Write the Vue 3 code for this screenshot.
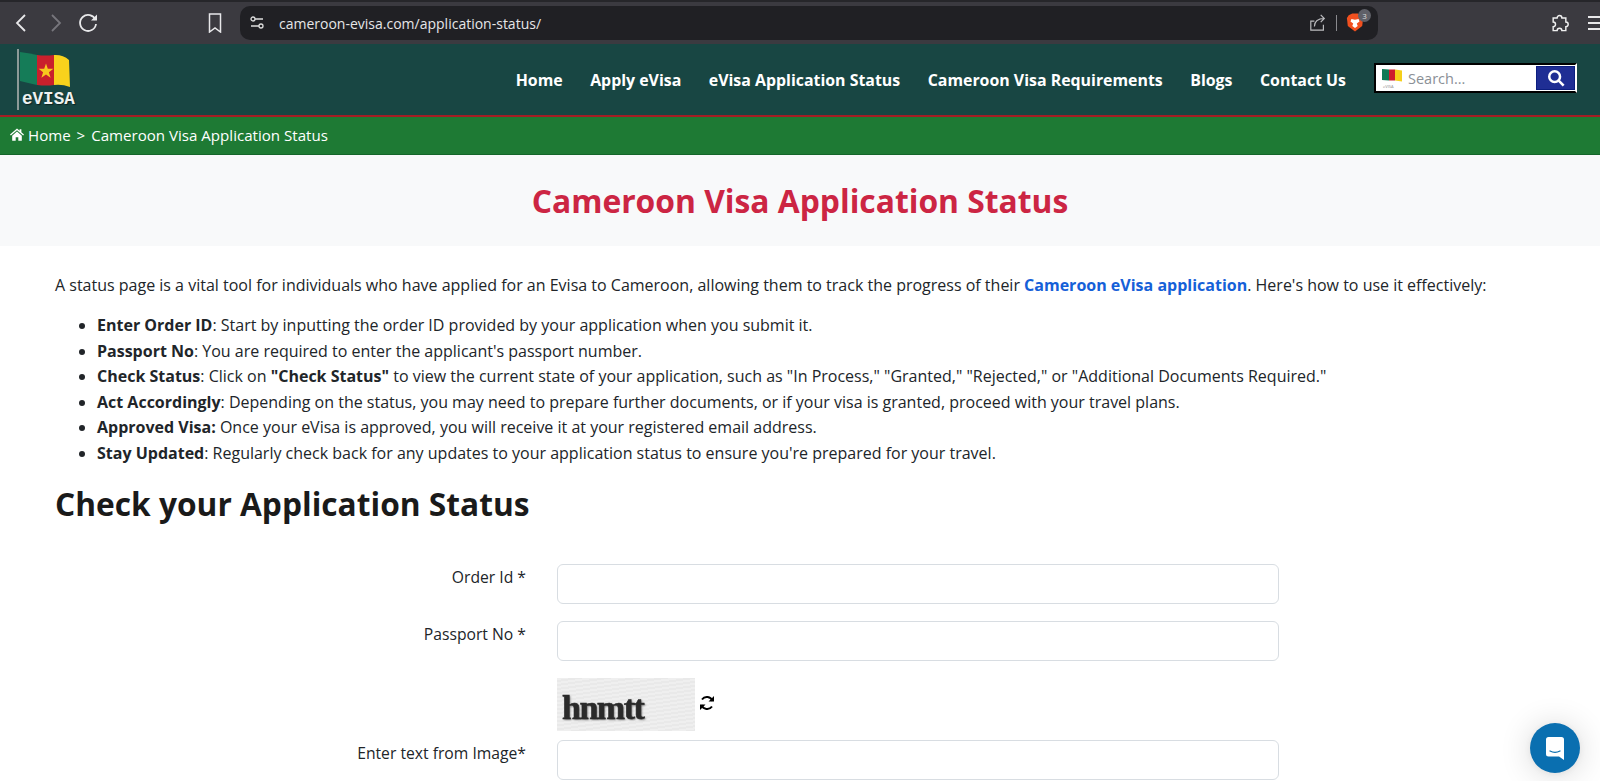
<template>
  <div class="page">
    <!-- Browser chrome -->
    <div class="chrome">
      <div class="chrome-nav">
        <svg class="ic back" viewBox="0 0 24 24"><path d="M15 4l-8 8 8 8" /></svg>
        <svg class="ic fwd" viewBox="0 0 24 24"><path d="M9 4l8 8-8 8" /></svg>
        <svg class="ic reload" viewBox="0 0 24 24"><path d="M19.500 9A8 8 0 1 0 20 13" /><path class="solid" d="M15 9.500h6v-6z" /></svg>
        <svg class="ic bookmark" viewBox="0 0 14 20"><path d="M1.500 1h11v18L7 15l-5.500 4z" /></svg>
      </div>
      <div class="urlbar">
        <svg class="tune" viewBox="0 0 16 16"><circle cx="4" cy="4" r="2" /><path d="M6 4h8M2 11h8" /><circle cx="12" cy="11" r="2" /></svg>
        <span class="url">cameroon-evisa.com/application-status/</span>
        <div class="url-right">
          <svg class="share" viewBox="0 0 20 20"><path d="M16 12v6H2V8h4" /><path d="M6 14c0-6 4-9 11-9M13 1l4 4-4 4" /></svg>
          <span class="sep"></span>
          <div class="brave">
            <svg viewBox="0 0 20 22"><path fill="#f1501f" d="M3 3l4-2h6l4 2 2 3-1 9-8 6-8-6-1-9z" /><path fill="#fff" d="M6 7l4 1 4-1 1 3-3 2 1 3-3 2-3-2 1-3-3-2z" /></svg>
            <span class="badge">3</span>
          </div>
        </div>
      </div>
      <svg class="puzzle" viewBox="0 0 24 24"><path d="M9 5a3 3 0 0 1 6 0h5v5a3 3 0 0 1 0 6v5h-5a3 3 0 0 0-6 0H4v-5a3 3 0 0 0 0-6V5z" /></svg>
      <div class="burger"><i></i><i></i><i></i></div>
    </div>

    <!-- Site header -->
    <header class="site-header">
      <div class="logo">
        <svg class="flag" viewBox="0 0 50 36">
          <path fill="#157c58" d="M0 0q8 1 17 3v30Q8 31 0 29z" />
          <path fill="#c9202c" d="M17 3q8 1 17 0v30q-8 1-17 0z" />
          <path fill="#f8d21c" d="M34 3q9-.5 15 5L50 35q-8-3-16-2z" />
          <path fill="#f8c81e" d="M26 11.500l1.800 5.300h5.600l-4.500 3.400 1.700 5.500-4.600-3.300-4.600 3.300 1.700-5.500-4.500-3.400h5.600z" />
        </svg>
        <span class="logo-text">eVISA</span>
      </div>
      <nav class="nav">
        <a v-for="item in navItems" :key="item">{{ item }}</a>
      </nav>
      <div class="search">
        <svg class="search-flag" viewBox="0 0 20 21">
          <path fill="#0f7a56" d="M0 1l7 .5v11L0 12z" />
          <rect x="7" y="1.500" width="6" height="11" fill="#ce1b2c" />
          <path fill="#f5cf1a" d="M13 1.500l7 1v11l-7-1z" />
          <text x="1" y="20" class="mini">eVISA</text>
        </svg>
        <span class="search-ph">Search...</span>
        <button class="search-btn">
          <svg viewBox="0 0 20 20"><circle cx="8.500" cy="8.500" r="6" /><path d="M13 13l5.500 5.500" /></svg>
        </button>
      </div>
    </header>

    <!-- Breadcrumb -->
    <div class="crumb">
      <svg class="home" viewBox="0 0 16 14"><path d="M8 0L0 7l1 1 7-6 7 6 1-1-3-2.600V1h-2v1.700zM2.500 8.500V14h4v-4h3v4h4V8.500L8 3.500z" /></svg>
      <span>Home <i class="gt">&gt;</i> Cameroon Visa Application Status</span>
    </div>

    <div class="title-band"><h1>Cameroon Visa Application Status</h1></div>

    <main class="content">
      <p class="intro">
        A status page is a vital tool for individuals who have applied for an Evisa to Cameroon, allowing them to track the progress of their
        <a>Cameroon eVisa application</a>. Here's how to use it effectively:
      </p>
      <ul>
        <li><b>Enter Order ID</b>: Start by inputting the order ID provided by your application when you submit it.</li>
        <li><b>Passport No</b>: You are required to enter the applicant's passport number.</li>
        <li><b>Check Status</b>: Click on <b>"Check Status"</b> to view the current state of your application, such as "In Process," "Granted," "Rejected," or "Additional Documents Required."</li>
        <li><b>Act Accordingly</b>: Depending on the status, you may need to prepare further documents, or if your visa is granted, proceed with your travel plans.</li>
        <li><b>Approved Visa:</b> Once your eVisa is approved, you will receive it at your registered email address.</li>
        <li><b>Stay Updated</b>: Regularly check back for any updates to your application status to ensure you're prepared for your travel.</li>
      </ul>
      <h2>Check your Application Status</h2>

      <form class="status-form">
        <label>Order Id *</label>
        <input type="text" />
        <label>Passport No *</label>
        <input type="text" />
        <span></span>
        <div class="captcha-row">
          <div class="captcha"><span>hnmtt</span></div>
          <svg class="refresh" viewBox="0 0 16 16"><path d="M13.500 6A6 6 0 0 0 3 4.500" /><path d="M2.500 10A6 6 0 0 0 13 11.500" /><path class="solid" d="M15 1v5.500H9.500zM1 15V9.500h5.500z" /></svg>
        </div>
        <label>Enter text from Image*</label>
        <input type="text" />
      </form>
    </main>

    <button class="chat">
      <svg viewBox="0 0 24 24"><path fill="#fff" d="M3 3.500A2.500 2.500 0 0 1 5.500 1h13A2.500 2.500 0 0 1 21 3.500V24l-5-3.500H5.500A2.500 2.500 0 0 1 3 18z" /><path d="M7 15c3 1.600 7 1.600 10 0" fill="none" stroke="#0a6fb0" stroke-width="1.300" stroke-linecap="round" /></svg>
    </button>
  </div>
</template>

<script setup>
const navItems = ['Home', 'Apply eVisa', 'eVisa Application Status', 'Cameroon Visa Requirements', 'Blogs', 'Contact Us']
</script>

<style>
html, body {
  margin: 0;
  overflow: hidden;
  background: #fff;
}
</style>

<style scoped>
.page {
  height: 781px;
  overflow: hidden;
  position: relative;
  font-family: "Open Sans", "Noto Sans", sans-serif;
  color: #212529;
}

/* Browser chrome */
.chrome {
  height: 42px;
  border-top: 2px solid #26262a;
  background: #3b3a40;
  display: flex;
  align-items: center;
}
.chrome-nav {
  width: 240px;
  display: flex;
  align-items: center;
  flex-shrink: 0;
}
.ic {
  width: 24px;
  height: 24px;
  fill: none;
  stroke: #e8e8ea;
  stroke-width: 1.800;
}
.ic .solid {
  fill: #e8e8ea;
  stroke: none;
}
.back { margin-left: 10px; }
.fwd { margin-left: 9px; stroke: #77767c; }
.reload { margin-left: 9px; }
.bookmark {
  width: 14px;
  height: 20px;
  margin-left: 108px;
  stroke-width: 1.500;
}
.urlbar {
  width: 1138px;
  height: 34px;
  flex-shrink: 0;
  border-radius: 10px;
  background: #202024;
  display: flex;
  align-items: center;
  padding-left: 9px;
  box-sizing: border-box;
}
.tune {
  width: 16px;
  height: 16px;
  fill: none;
  stroke: #ddd;
  stroke-width: 1.300;
}
.url {
  margin-left: 14px;
  font-size: 14px;
  color: #e6e6e8;
}
.url-right {
  margin-left: auto;
  display: flex;
  align-items: center;
  padding-right: 6px;
}
.share {
  width: 18px;
  height: 18px;
  fill: none;
  stroke: #bdbdc0;
  stroke-width: 1.300;
}
.sep {
  width: 1px;
  height: 16px;
  background: #8a8a8e;
  margin: 0 9px;
}
.brave {
  position: relative;
  width: 26px;
  height: 22px;
}
.brave svg {
  display: block;
  width: 18px;
  height: 21px;
}
.badge {
  position: absolute;
  top: -3px;
  right: 1px;
  width: 13px;
  height: 13px;
  border-radius: 50%;
  background: #5f6068;
  color: #ddd;
  font-size: 8px;
  line-height: 13px;
  text-align: center;
}
.puzzle {
  width: 19px;
  height: 19px;
  margin-left: 172px;
  flex-shrink: 0;
  fill: none;
  stroke: #f0f0f0;
  stroke-width: 1.800;
}
.burger {
  margin-left: 19px;
  width: 18px;
  flex-shrink: 0;
  display: flex;
  flex-direction: column;
  gap: 4px;
}
.burger i {
  display: block;
  height: 2px;
  background: #e8e8ea;
}

/* Header */
.site-header {
  height: 71px;
  background: #184643;
  border-bottom: 2px solid #a51d24;
  display: flex;
  align-items: center;
}
.logo {
  position: relative;
  width: 62px;
  height: 61px;
  margin-left: 17px;
  border-left: 2px solid #8c9a98;
  flex-shrink: 0;
}
.flag {
  position: absolute;
  left: 1px;
  top: 3px;
  width: 50px;
  height: 36px;
}
.logo-text {
  position: absolute;
  left: 3px;
  top: 41px;
  font: bold 17.600px/18px "Liberation Mono", monospace;
  color: #eef2f1;
  text-shadow: 1px 1px 1px rgba(0,0,0,0.5);
}
.nav {
  display: flex;
  gap: 27.500px;
  margin-left: auto;
}
.nav a {
  color: #fff;
  font-weight: 700;
  font-size: 15.900px;
  white-space: nowrap;
}
.search {
  width: 203px;
  height: 30px;
  margin: 0 23px 3px 28px;
  background: #fff;
  border: 2px solid #000;
  border-right-color: #fff;
  box-sizing: border-box;
  display: flex;
  align-items: center;
  padding-left: 6px;
}
.search-flag {
  width: 20px;
  height: 21px;
}
.mini {
  font-size: 4px;
  fill: #888;
}
.search-ph {
  margin-left: 6px;
  font-size: 14.500px;
  color: #8a8f96;
}
.search-btn {
  margin-left: auto;
  margin-right: 0;
  width: 39px;
  height: 24px;
  border: 1px solid #0c1e80;
  background: #1f2e94;
  padding: 0;
  display: flex;
  align-items: center;
  justify-content: center;
}
.search-btn svg {
  width: 18px;
  height: 18px;
  fill: none;
  stroke: #fff;
  stroke-width: 2.800;
}

/* Breadcrumb */
.crumb {
  height: 37px;
  background: #1e7a34;
  border-bottom: 1px solid #14652a;
  display: flex;
  align-items: center;
  padding: 0 0 2px 10px;
  box-sizing: border-box;
  height: 38px;
  color: #fff;
  font-size: 15.100px;
  gap: 4px;
}
.gt {
  font-style: normal;
  margin: 0 2px;
}
.home {
  width: 14px;
  height: 13px;
  fill: #fff;
}

.title-band {
  height: 91px;
  background: #f8f9fa;
  display: flex;
  align-items: center;
  justify-content: center;
}
.title-band h1 {
  margin: 0;
  color: #cc2543;
  font-size: 31.800px;
  font-weight: 700;
}

/* Content */
.content {
  padding: 0 55px;
}
.intro {
  margin: 27px 0 16px;
  font-size: 16px;
  line-height: 24px;
  white-space: nowrap;
}
.intro a {
  color: #1560d8;
  font-weight: 700;
}
ul {
  margin: 0;
  padding-left: 42px;
  font-size: 16px;
  line-height: 25.500px;
  white-space: nowrap;
}
h2 {
  margin: 15px 0 0;
  font-size: 31.700px;
  line-height: 46px;
  font-weight: 700;
  color: #1a1a1a;
}
.status-form {
  margin-top: 37px;
  display: grid;
  grid-template-columns: 471px 722px;
  column-gap: 31px;
  row-gap: 17px;
}
.status-form label {
  text-align: right;
  font-size: 15.700px;
  line-height: 24px;
  padding-top: 1px;
}
.status-form input {
  height: 40px;
  box-sizing: border-box;
  border: 1px solid #d8dde2;
  border-radius: 6px;
  background: #fff;
}
.captcha-row {
  display: flex;
  align-items: center;
  gap: 4px;
  margin-bottom: -8px;
}
.captcha {
  width: 138px;
  height: 53px;
  background: repeating-linear-gradient(172deg, #efefef 0 2px, #e9e9e9 2px 4px);
  display: flex;
  align-items: flex-end;
  padding: 0 0 5px 5px;
  box-sizing: border-box;
}
.captcha span {
  font: 700 34px "Liberation Serif", serif;
  color: #2a2a2a;
  line-height: 36px;
  letter-spacing: -1.500px;
  -webkit-text-stroke: 0.6px #2a2a2a;
  text-shadow: 1px 1px 2px rgba(0,0,0,0.5);
  filter: blur(0.4px);
}
.refresh {
  width: 16px;
  height: 16px;
  fill: none;
  stroke: #000;
  stroke-width: 2;
  margin-bottom: 3px;
}
.refresh .solid {
  fill: #000;
  stroke: none;
}

.chat {
  position: absolute;
  left: 1530px;
  top: 723px;
  width: 50px;
  height: 50px;
  border: none;
  border-radius: 50%;
  background: #0a6fb0;
  padding: 13px;
  box-shadow: 0 1px 6px rgba(0,0,0,0.06), 0 2px 32px rgba(0,0,0,0.16);
}
.chat svg {
  display: block;
  width: 24px;
  height: 24px;
}
</style>
